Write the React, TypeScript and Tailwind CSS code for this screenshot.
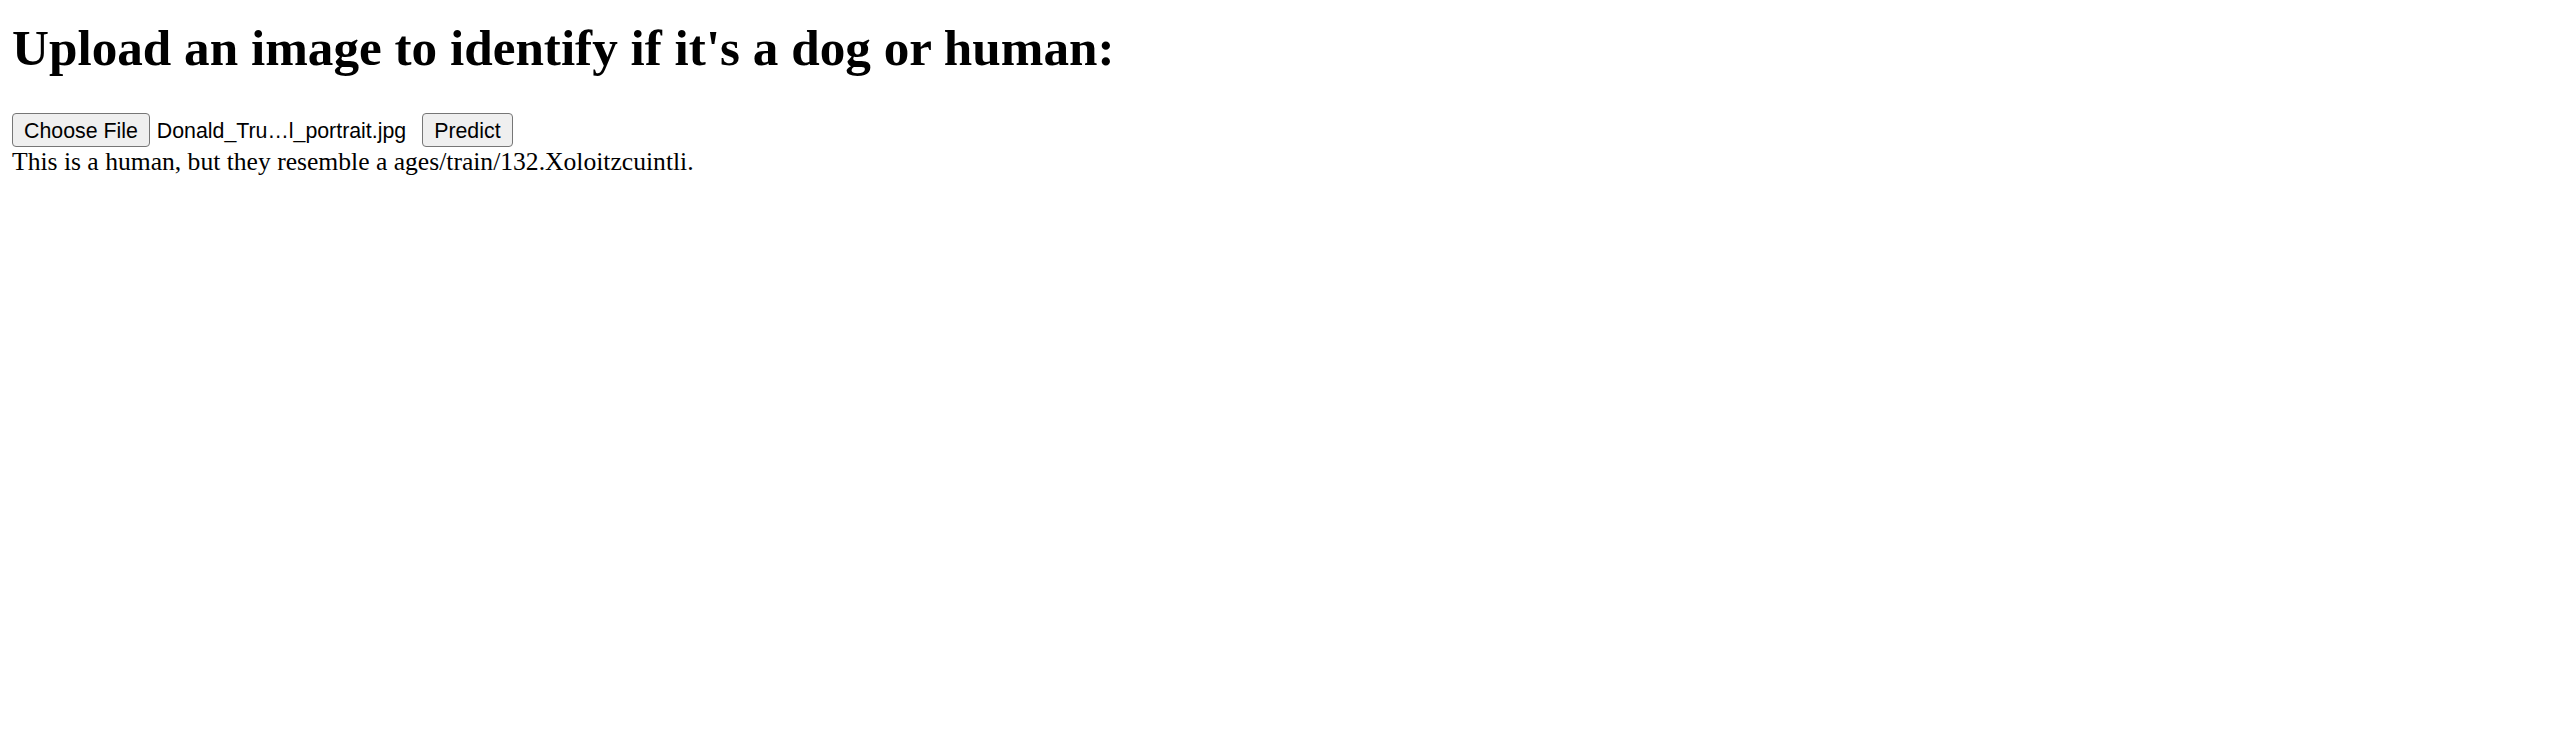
export default function App() {
  return (
    <div className="min-h-screen bg-white text-black px-[12px] pt-[19px]">
      <h1 className="text-[51.2px] leading-[57px] font-bold font-['Liberation_Serif',serif] mb-[37px]">
        Upload an image to identify if it's a dog or human:
      </h1>
      <div className="flex items-center h-[34px] font-['Liberation_Sans',Arial,sans-serif] text-[21.33px]">
        <button className="h-[34px] px-[11px] pt-[3px] rounded-[4px] border-[1.5px] border-[#767676] bg-[#efefef] leading-none">
          Choose File
        </button>
        <span className="ml-[7px] mt-[3px] leading-none">Donald_Tru…l_portrait.jpg</span>
        <button className="ml-[16px] h-[34px] px-[11px] pt-[3px] rounded-[4px] border-[1.5px] border-[#767676] bg-[#efefef] leading-none">
          Predict
        </button>
      </div>
      <p className="mt-0 text-[25.6px] leading-[30px] font-['Liberation_Serif',serif]">
        This is a human, but they resemble a ages/train/132.Xoloitzcuintli.
      </p>
    </div>
  )
}
